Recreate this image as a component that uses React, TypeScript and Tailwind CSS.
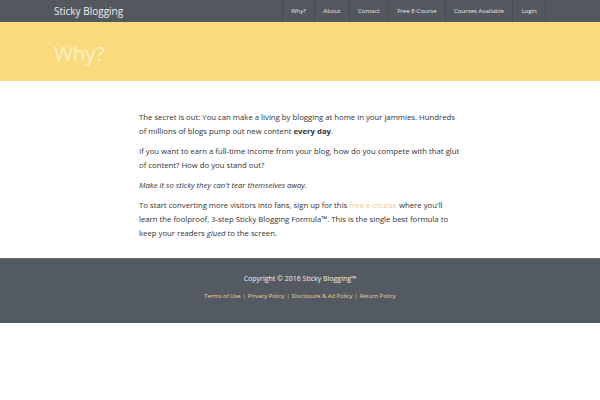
const NAV = ['Why?', 'About', 'Contact', 'Free E-Course', 'Courses Available', 'Login'];
const LINKS = ['Terms of Use', 'Privacy Policy', 'Disclosure & Ad Policy', 'Return Policy'];

export default function App() {
  return (
    <div className="min-h-[400px] bg-white" style={{ fontFamily: '"Open Sans", "Noto Sans", sans-serif' }}>
      <header className="h-[22px] bg-[#53575e]">
        <div className="mx-auto flex h-full w-[492px] items-center justify-between">
          <span className="text-[10px] text-[#f1f1f1]">Sticky Blogging</span>
          <nav className="flex h-full border-r border-[#494d53]">
            {NAV.map((n) => (
              <a key={n} className="flex h-full items-center border-l border-[#494d53] px-[8.2px] text-[6.1px] text-[#e6e6e6]">
                {n}
              </a>
            ))}
          </nav>
        </div>
      </header>

      <section className="h-[59px] bg-[#f9db7d]">
        <div className="mx-auto flex h-full w-[492px] items-center pt-[4px]">
          <h1 className="text-[20.4px] leading-none text-[#fdf1c4]">Why?</h1>
        </div>
      </section>

      <main className="mx-auto w-[322px] pt-[29px] pb-[18px] text-[7.75px] leading-[14px] text-[#333]">
        <p className="mb-[6px]">
          The secret is out: You can make a living by blogging at home in your jammies. Hundreds of millions of blogs pump out new content <b>every day</b>.
        </p>
        <p className="mb-[6px]">
          If you want to earn a full-time income from your blog, how do you compete with that glut of content? How do you stand out?
        </p>
        <p className="mb-[6px] italic">Make it so sticky they can't tear themselves away.</p>
        <p>
          To start converting more visitors into fans, sign up for this <a className="text-[#f2c98d]">free e-course</a> where you'll learn the foolproof, 3-step Sticky Blogging Formula™. This is the single best formula to keep your readers <i>glued</i> to the screen.
        </p>
      </main>

      <footer className="h-[65px] border-t border-[#6b6f75] bg-[#545a61] pt-[14px] text-center">
        <p className="text-[7px] leading-[12px] text-[#f2f2f2]">Copyright © 2016 Sticky Blogging™</p>
        <p className="mt-[6px] text-[5.9px] leading-[10px] text-[#c9c9c9]">
          {LINKS.map((l, i) => (
            <span key={l}>
              {i > 0 && <span className="px-[2px]">|</span>}
              <a className="text-[#e9d9a4]">{l}</a>
            </span>
          ))}
        </p>
      </footer>
    </div>
  );
}
